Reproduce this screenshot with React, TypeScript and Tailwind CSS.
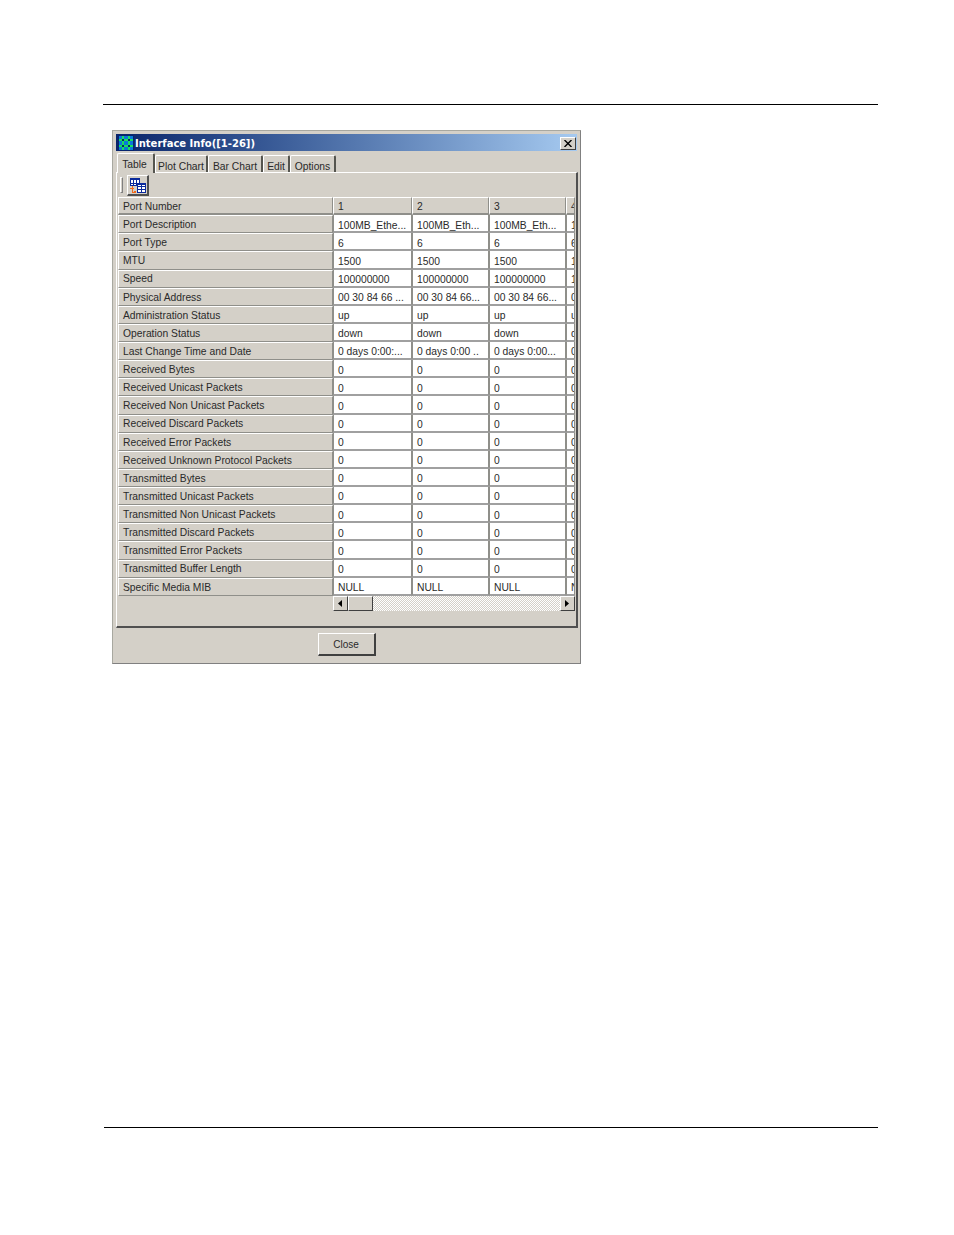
import React from "react";

const rows: [string, string, string, string, string][] = [
  ["Port Description", "100MB_Ethe...", "100MB_Eth...", "100MB_Eth...", "1"],
  ["Port Type", "6", "6", "6", "6"],
  ["MTU", "1500", "1500", "1500", "1"],
  ["Speed", "100000000", "100000000", "100000000", "1"],
  ["Physical Address", "00 30 84 66 ...", "00 30 84 66...", "00 30 84 66...", "0"],
  ["Administration Status", "up", "up", "up", "u"],
  ["Operation Status", "down", "down", "down", "d"],
  ["Last Change Time and Date", "0 days 0:00:...", "0 days 0:00 ..", "0 days 0:00...", "0"],
  ["Received Bytes", "0", "0", "0", "0"],
  ["Received Unicast Packets", "0", "0", "0", "0"],
  ["Received Non Unicast Packets", "0", "0", "0", "0"],
  ["Received Discard Packets", "0", "0", "0", "0"],
  ["Received Error Packets", "0", "0", "0", "0"],
  ["Received Unknown Protocol Packets", "0", "0", "0", "0"],
  ["Transmitted Bytes", "0", "0", "0", "0"],
  ["Transmitted Unicast Packets", "0", "0", "0", "0"],
  ["Transmitted Non Unicast Packets", "0", "0", "0", "0"],
  ["Transmitted Discard Packets", "0", "0", "0", "0"],
  ["Transmitted Error Packets", "0", "0", "0", "0"],
  ["Transmitted Buffer Length", "0", "0", "0", "0"],
  ["Specific Media MIB", "NULL", "NULL", "NULL", "N"],
];

const widths = ["w-[79px]", "w-[77px]", "w-[77px]", "w-[9px]"];

function Tab({ label, active, w }: { label: string; active?: boolean; w: string }) {
  return (
    <div
      className={`${w} flex items-center justify-center rounded-t-[2px] border-t border-l border-t-white border-l-white border-r-2 border-r-[#55554f] ${
        active ? "h-[20px] -mb-[1px] relative z-10 bg-[#d4d0c8] pt-[3px] pr-[2px]" : "h-[17px] pt-[7px]"
      }`}
    >
      {label}
    </div>
  );
}

function TitleIcon() {
  return (
    <svg width="16" height="16" viewBox="0 0 16 16" className="shrink-0" shapeRendering="crispEdges">
      <rect width="16" height="16" fill="#06246e" />
      <rect x="1" y="1" width="14" height="14" fill="#0a78d8" />
      <g fill="#18e060">
        <rect x="1" y="4" width="14" height="2" />
        <rect x="1" y="10" width="14" height="2" />
        <rect x="4" y="1" width="2" height="14" />
        <rect x="10" y="1" width="2" height="14" />
      </g>
      <g fill="#06246e">
        <rect x="4" y="4" width="2" height="2" />
        <rect x="10" y="4" width="2" height="2" />
        <rect x="4" y="10" width="2" height="2" />
        <rect x="10" y="10" width="2" height="2" />
      </g>
    </svg>
  );
}

function TableIcon() {
  return (
    <svg width="16" height="15" viewBox="0 0 16 15" shapeRendering="crispEdges">
      <path d="M0.5 0.5h9v7h-9zM0.5 5.5h9M3.5 0.5v7M6.5 0.5v7" fill="#fff" stroke="#0a2a9c" />
      <path d="M0 0h10v2H0z" fill="#0a2a9c" />
      <path d="M7.5 5.5h8v9h-8zM7.5 8.5h8M7.5 11.5h8M11.5 5.5v9" fill="#fff" stroke="#0a2a9c" />
      <path d="M7 5h9v2H7z" fill="#0a2a9c" />
      <path d="M2 8v6h3M0 10h4" fill="none" stroke="#f26a1b" strokeWidth="1" />
      <rect x="4" y="13" width="2" height="2" fill="#f26a1b" />
    </svg>
  );
}

function Arrow({ dir }: { dir: "l" | "r" }) {
  return (
    <svg width="5" height="7" viewBox="0 0 5 7">
      <path d={dir === "l" ? "M4 0v7L0 3.5z" : "M0 0v7l4-3.5z"} fill="#000" />
    </svg>
  );
}

function ScrollBtn({ dir }: { dir: "l" | "r" }) {
  return (
    <div className="w-[15px] h-[15px] bg-[#d4d0c8] border-t border-l border-t-white border-l-white border-r border-b border-r-[#404040] border-b-[#404040] flex items-center justify-center">
      <Arrow dir={dir} />
    </div>
  );
}

export default function App() {
  return (
    <div
      className="w-[954px] h-[1235px] bg-white flex flex-col text-[#2a2a2a] text-[10.3px] leading-none overflow-hidden"
      style={{ fontFamily: '"Liberation Sans", Arial, sans-serif' }}
    >
      <div className="mt-[104px] ml-[103px] w-[775px] h-px bg-black" />
      <div className="mt-[25px] ml-[112px] w-[469px] h-[534px] bg-[#d4d0c8] border border-[#a8a8a0] border-r-[#808080] border-b-[#808080] flex flex-col">
        {/* title bar */}
        <div className="mt-[3px] ml-[3px] mr-[3px] h-[17px] flex items-center pl-[2px] pr-[1px] bg-gradient-to-r from-[#0a246a] to-[#a6caf0]">
          <TitleIcon />
          <div className="ml-[1px] pt-[2px] text-white font-bold text-[10px] flex-1" style={{ fontFamily: '"DejaVu Sans", sans-serif' }}>
            Interface Info([1-26])
          </div>
          <div className="mt-[1px] w-[16px] h-[13px] bg-[#d4d0c8] border-t border-l border-t-white border-l-white border-r border-b border-r-[#404040] border-b-[#404040] flex items-center justify-center">
            <svg width="8" height="7" viewBox="0 0 8 7">
              <path d="M0.5 0L7.5 7M7.5 0L0.5 7" stroke="#000" strokeWidth="1.4" />
            </svg>
          </div>
        </div>

        {/* tabs */}
        <div className="mt-[2px] ml-[4px] h-[19px] flex items-end">
          <Tab label="Table" active w="w-[38px]" />
          <Tab label="Plot Chart" w="w-[53px]" />
          <Tab label="Bar Chart" w="w-[55px]" />
          <Tab label="Edit" w="w-[27px]" />
          <Tab label="Options" w="w-[46px]" />
        </div>

        {/* panel */}
        <div className="ml-[3px] mr-[2px] h-[456px] border-t border-l border-t-white border-l-white border-r-2 border-r-[#505050] border-b-2 border-b-[#505050] flex flex-col">
          {/* toolbar */}
          <div className="h-[24px] flex items-start pt-[2px] pl-[3px] gap-[4px] shrink-0">
            <div className="mt-[2px] w-[3px] h-[16px] border border-l-white border-t-white border-r-[#808080] border-b-[#808080]" />
            <div className="w-[22px] h-[21px] border-t border-l border-t-white border-l-white border-r-2 border-b-2 border-r-[#505050] border-b-[#505050] flex items-center justify-center">
              <TableIcon />
            </div>
          </div>

          {/* table */}
          <div className="ml-[1px] w-[457px] flex flex-col">
            <div className="flex h-[18.14px]">
              <div className="w-[215px] shrink-0 pl-[4px] pt-[3px] flex items-center border-t border-l border-t-white border-l-white border-b-2 border-b-[#8f8f8a] border-r border-r-[#8f8f8a]">
                Port Number
              </div>
              {["1", "2", "3", "4"].map((v, i) => (
                <div
                  key={v}
                  className={`${widths[i]} shrink-0 overflow-hidden whitespace-nowrap pl-[4px] pt-[3px] flex items-center border-t border-l border-t-white border-l-white border-b-2 border-b-[#8f8f8a] border-r border-r-[#8f8f8a]`}
                >
                  {v}
                </div>
              ))}
            </div>
            {rows.map((r) => (
              <div key={r[0]} className="flex h-[18.14px]">
                <div className="w-[215px] shrink-0 pl-[4px] pt-[2px] flex items-center whitespace-nowrap border-t border-l border-t-white border-l-white border-b border-b-[#8f8f8a] border-r border-r-[#8f8f8a]">
                  {r[0]}
                </div>
                {r.slice(1).map((v, i) => (
                  <div
                    key={i}
                    className={`${widths[i]} shrink-0 overflow-hidden whitespace-nowrap bg-white pl-[4px] pt-[5px] flex items-center border-l border-l-[#8f8f8a] border-r border-r-[#8f8f8a] border-b-2 border-b-[#a0a0a0]`}
                  >
                    {v}
                  </div>
                ))}
              </div>
            ))}
            {/* scrollbar */}
            <div className="flex pl-[215px]">
              <ScrollBtn dir="l" />
              <div className="flex-1 h-[15px] flex bg-[repeating-conic-gradient(#d4d0c8_0_25%,#ffffff_0_50%)] bg-[length:2px_2px]">
                <div className="w-[25px] h-[15px] bg-[#d4d0c8] border-t border-l border-t-white border-l-white border-r border-b border-r-[#404040] border-b-[#404040]" />
              </div>
              <ScrollBtn dir="r" />
            </div>
          </div>
        </div>

        {/* footer */}
        <div className="flex-1 flex justify-center items-start pt-[5px]">
          <div className="w-[58px] h-[23px] pt-[1px] border-t border-l border-t-white border-l-white border-r-2 border-b-2 border-r-[#404040] border-b-[#404040] flex items-center justify-center text-[10px]">
            Close
          </div>
        </div>
      </div>
      <div className="mt-[463px] ml-[104px] w-[774px] h-px bg-black" />
    </div>
  );
}
